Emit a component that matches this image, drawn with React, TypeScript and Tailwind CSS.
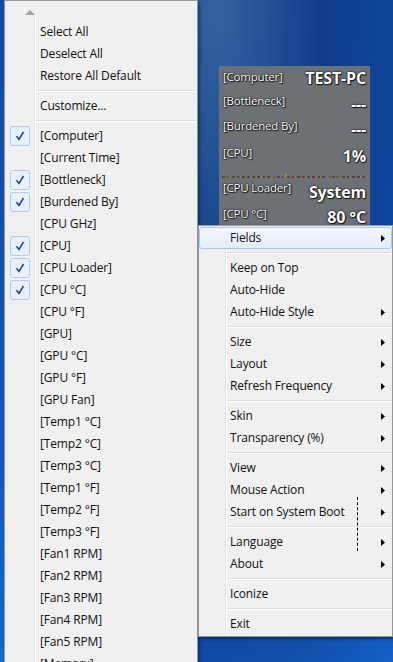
import React from "react";

const fields: [string, boolean][] = [
  ["[Computer]", true],
  ["[Current Time]", false],
  ["[Bottleneck]", true],
  ["[Burdened By]", true],
  ["[CPU GHz]", false],
  ["[CPU]", true],
  ["[CPU Loader]", true],
  ["[CPU °C]", true],
  ["[CPU °F]", false],
  ["[GPU]", false],
  ["[GPU °C]", false],
  ["[GPU °F]", false],
  ["[GPU Fan]", false],
  ["[Temp1 °C]", false],
  ["[Temp2 °C]", false],
  ["[Temp3 °C]", false],
  ["[Temp1 °F]", false],
  ["[Temp2 °F]", false],
  ["[Temp3 °F]", false],
  ["[Fan1 RPM]", false],
  ["[Fan2 RPM]", false],
  ["[Fan3 RPM]", false],
  ["[Fan4 RPM]", false],
  ["[Fan5 RPM]", false],
  ["[Memory]", false],
];

// null = separator, [label, hasSubmenu]
const mainMenu: ([string, boolean] | null)[] = [
  ["Fields", true],
  null,
  ["Keep on Top", false],
  ["Auto-Hide", false],
  ["Auto-Hide Style", true],
  null,
  ["Size", true],
  ["Layout", true],
  ["Refresh Frequency", true],
  null,
  ["Skin", true],
  ["Transparency (%)", true],
  null,
  ["View", true],
  ["Mouse Action", true],
  ["Start on System Boot", true],
  null,
  ["Language", true],
  ["About", true],
  null,
  ["Iconize", false],
  null,
  ["Exit", false],
];

const Check = () => (
  <div className="flex h-[20px] w-[20px] items-center justify-center rounded-[3px] border border-[#aecbef] bg-[#eaf0f9]">
    <svg width="12" height="12" viewBox="0 0 12 12">
      <path d="M2.5 6.2 L5 9.5 L9.5 2" fill="none" stroke="#1d3f9e" strokeWidth="1.5" />
    </svg>
  </div>
);

const SubArrow = () => (
  <svg width="4" height="7" viewBox="0 0 4 7">
    <path d="M0 0 L4 3.5 L0 7 Z" fill="#000" />
  </svg>
);

const LeftRow = ({ label, checked }: { label: string; checked?: boolean }) => (
  <div className="flex h-[22px]">
    <div className="flex w-[30px] shrink-0 items-center justify-center border-r border-[#e2e3e3]">
      {checked && <Check />}
    </div>
    <div className="flex flex-1 items-center border-l border-white pl-[4px]">{label}</div>
  </div>
);

const LeftSep = () => (
  <div className="flex h-[8px]">
    <div className="w-[30px] shrink-0 border-r border-[#e2e3e3]" />
    <div className="flex flex-1 flex-col justify-center border-l border-white pr-[1px]">
      <div className="h-px bg-[#dedede]" />
      <div className="h-px bg-white" />
    </div>
  </div>
);

const RightRow = ({ label, sub }: { label: string; sub: boolean }) => (
  <div className="flex h-[22px]">
    <div className="w-[27px] shrink-0 border-r border-[#e2e3e3]" />
    <div className="flex flex-1 items-center justify-between border-l border-white pl-[3px] pr-[7px]">
      <span>{label}</span>
      {sub && <SubArrow />}
    </div>
  </div>
);

const RightSep = () => (
  <div className="flex h-[8px]">
    <div className="w-[27px] shrink-0 border-r border-[#e2e3e3]" />
    <div className="flex flex-1 flex-col justify-center border-l border-white">
      <div className="h-px bg-[#dedede]" />
      <div className="h-px bg-white" />
    </div>
  </div>
);

const shadowText = "text-white [text-shadow:0_0_2px_#000,0_0_1px_#000,1px_1px_1px_#222]";

const GadgetRow = ({
  label,
  value,
  h,
  a,
  b,
}: {
  label: string;
  value: string;
  h: string;
  a: string;
  b: string;
}) => (
  <div className={`flex items-start justify-between ${h}`}>
    <span className={`text-[11.5px] leading-[14px] tracking-[-0.2px] ${a}`}>{label}</span>
    <span
      className={`text-[16px] font-bold leading-[18px] ${b}`}
      style={{ fontFamily: '"Liberation Sans Narrow", "Open Sans", sans-serif' }}
    >
      {value}
    </span>
  </div>
);

export default function App() {
  return (
    <div
      className="relative h-[662px] w-[393px] overflow-hidden bg-[radial-gradient(ellipse_at_55%_0%,#34649f_0%,#0f3d8a_35%,#0e48a0_65%,#1467d1_100%)] text-[12px] tracking-[-0.15px] text-[#111]"
      style={{ fontFamily: '"Open Sans", "Noto Sans", sans-serif' }}
    >
      {/* desktop gadget */}
      <div className={`absolute left-[219px] top-[66px] h-[170px] w-[151px] bg-[#6d7075] px-[4px] ${shadowText}`}>
        <GadgetRow label="[Computer]" value="TEST-PC" h="h-[24px]" a="mt-[4px]" b="mt-[3px]" />
        <GadgetRow label="[Bottleneck]" value="---" h="h-[24px]" a="mt-[4px]" b="mt-[5px]" />
        <GadgetRow label="[Burdened By]" value="---" h="h-[28px]" a="mt-[5px]" b="mt-[6px]" />
        <GadgetRow label="[CPU]" value="1%" h="h-[26px]" a="mt-[4px]" b="mt-[5px]" />
        <div className="h-[10px] pt-[6px]">
          <svg width="145" height="4" viewBox="0 0 145 4" className="-ml-[1px]">
            <line x1="0" y1="3" x2="145" y2="3" stroke="#2a2418" strokeWidth="1" strokeDasharray="3 2" />
            <line x1="6" y1="3" x2="140" y2="3" stroke="#c8902a" strokeWidth="1" strokeDasharray="2 9" />
            <line x1="64" y1="0" x2="64" y2="3" stroke="#d9a830" strokeWidth="1" />
          </svg>
        </div>
        <GadgetRow label="[CPU Loader]" value="System" h="h-[26px]" a="mt-[3px]" b="mt-[5px]" />
        <GadgetRow label="[CPU °C]" value="80 °C" h="h-[26px]" a="mt-[3px]" b="mt-[4px]" />
      </div>

      {/* fields submenu */}
      <div className="absolute left-[4px] top-0 h-[700px] w-[194px] border border-[#979797] bg-[#f0f0f0] shadow-[2px_2px_3px_rgba(0,0,0,0.35)]">
        <div className="h-[15px] pl-[20px] pt-[9px]">
          <svg width="10" height="5" viewBox="0 0 10 5">
            <path d="M0 5 L5 0 L10 5 Z" fill="#a3a3a3" />
          </svg>
        </div>
        <div className="flex h-[5px]">
          <div className="w-[30px] shrink-0 border-r border-[#e2e3e3]" />
          <div className="flex-1 border-l border-white" />
        </div>
        <LeftRow label="Select All" />
        <LeftRow label="Deselect All" />
        <LeftRow label="Restore All Default" />
        <LeftSep />
        <LeftRow label="Customize..." />
        <LeftSep />
        {fields.map(([label, checked]) => (
          <LeftRow key={label} label={label} checked={checked} />
        ))}
      </div>

      {/* main context menu */}
      <div className="absolute left-[198px] top-[225px] w-[195px] border border-[#979797] bg-[#f0f0f0] py-[1px] shadow-[2px_2px_3px_rgba(0,0,0,0.45)]">
        {mainMenu.map((item, i) => {
          if (item === null) return <RightSep key={i} />;
          if (i === 0)
            return (
              <div
                key={i}
                className="flex h-[22px] rounded-[3px] border border-[#a9c8ee] bg-[linear-gradient(180deg,#f2f7fe_0%,#e4edfa_100%)]"
              >
                <div className="w-[27px] shrink-0" />
                <div className="flex flex-1 items-center justify-between pl-[3px] pr-[6px]">
                  <span>{item[0]}</span>
                  <SubArrow />
                </div>
              </div>
            );
          return <RightRow key={i} label={item[0]} sub={item[1]} />;
        })}
      </div>

      {/* dashed cursor line */}
      <div className="absolute left-[357px] top-[497px] h-[54px] border-l border-dashed border-black" />
    </div>
  );
}
